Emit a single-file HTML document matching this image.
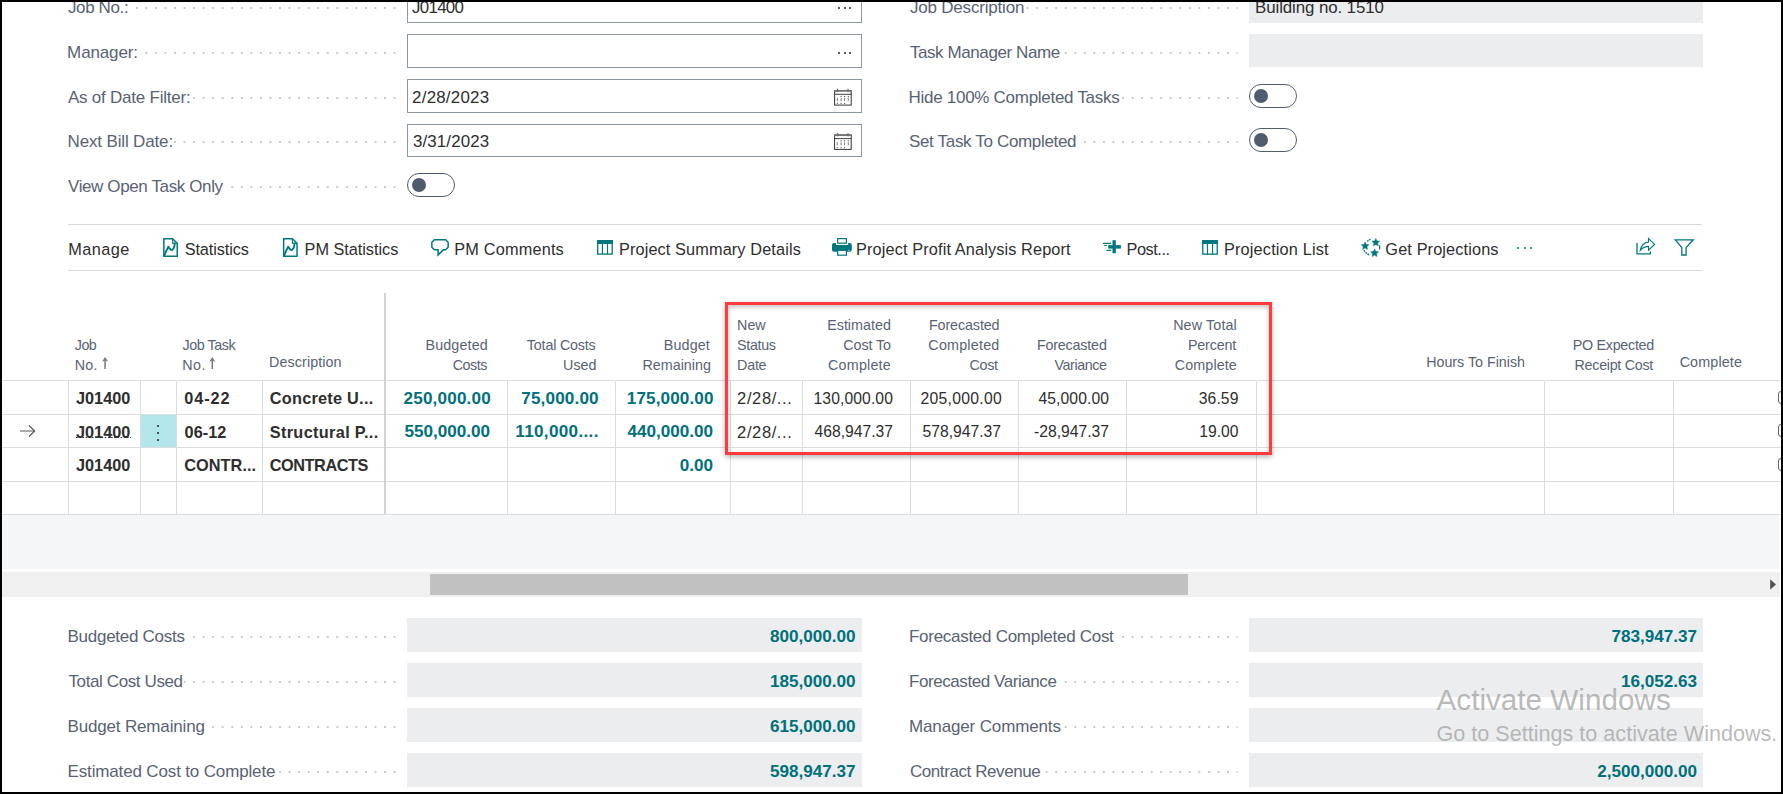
<!DOCTYPE html>
<html><head><meta charset="utf-8"><title>Job Projections</title>
<style>
html,body{margin:0;padding:0;}
body{width:1783px;height:794px;position:relative;overflow:hidden;background:#fff;font-family:"Liberation Sans",sans-serif;}
.t{position:absolute;line-height:20px;white-space:nowrap;}
.r{position:absolute;}
.lb{background:#fff;padding-right:1px;}
.dots{position:absolute;height:2.2px;background-image:linear-gradient(90deg,#c6cad0 0,#c6cad0 2.2px,rgba(255,255,255,0) 2.2px);background-size:9.55px 2.2px;background-repeat:repeat-x;border-radius:1px;}
.tg{position:absolute;width:48px;height:24px;box-sizing:border-box;border:1.4px solid #505C6D;border-radius:12px;}
.kn{position:absolute;left:3.6px;top:3.6px;width:14px;height:14px;border-radius:50%;background:#505C6D;}
.ov{position:absolute;left:0;top:0;pointer-events:none;}
.frame{position:absolute;left:0;top:0;width:1783px;height:794px;box-sizing:border-box;border:2px solid #000;pointer-events:none;}
</style></head><body>
<div class="dots" style="left:69.05px;top:6.9px;width:327.55px;"></div>
<div class="t" style="top:-2.20px;font-size:17px;color:#586373;letter-spacing:-0.38px;left:68.0px;"><span class="lb">Job No.:</span></div>
<div class="dots" style="left:69.05px;top:51.9px;width:327.55px;"></div>
<div class="t" style="top:42.80px;font-size:17px;color:#586373;letter-spacing:-0.128px;left:67.1px;"><span class="lb">Manager:</span></div>
<div class="dots" style="left:69.05px;top:96.9px;width:327.55px;"></div>
<div class="t" style="top:87.80px;font-size:17px;color:#586373;letter-spacing:-0.231px;left:68.0px;"><span class="lb">As of Date Filter:</span></div>
<div class="dots" style="left:69.05px;top:140.9px;width:327.55px;"></div>
<div class="t" style="top:131.80px;font-size:17px;color:#586373;letter-spacing:-0.151px;left:67.55px;"><span class="lb">Next Bill Date:</span></div>
<div class="dots" style="left:69.05px;top:185.9px;width:327.55px;"></div>
<div class="t" style="top:176.80px;font-size:17px;color:#586373;letter-spacing:-0.38px;left:68.0px;"><span class="lb">View Open Task Only</span></div>
<div class="dots" style="left:912.4px;top:6.9px;width:325.70000000000005px;"></div>
<div class="t" style="top:-2.20px;font-size:17px;color:#586373;letter-spacing:-0.19px;left:909.9px;"><span class="lb">Job Description</span></div>
<div class="dots" style="left:912.4px;top:51.9px;width:325.70000000000005px;"></div>
<div class="t" style="top:42.80px;font-size:17px;color:#586373;letter-spacing:-0.41300000000000003px;left:909.9px;"><span class="lb">Task Manager Name</span></div>
<div class="dots" style="left:912.4px;top:96.9px;width:325.70000000000005px;"></div>
<div class="t" style="top:87.80px;font-size:17px;color:#586373;letter-spacing:-0.28400000000000003px;left:908.55px;"><span class="lb">Hide 100% Completed Tasks</span></div>
<div class="dots" style="left:912.4px;top:140.9px;width:325.70000000000005px;"></div>
<div class="t" style="top:131.80px;font-size:17px;color:#586373;letter-spacing:-0.335px;left:909.0px;"><span class="lb">Set Task To Completed</span></div>
<div class="r" style="left:407px;top:-11px;width:455px;height:34px;border:1px solid #8d96a3;box-sizing:border-box;background:#fff;"></div>
<div class="r" style="left:407px;top:34px;width:455px;height:34px;border:1px solid #8d96a3;box-sizing:border-box;background:#fff;"></div>
<div class="r" style="left:407px;top:79px;width:455px;height:34px;border:1px solid #8d96a3;box-sizing:border-box;background:#fff;"></div>
<div class="r" style="left:407px;top:123.5px;width:455px;height:33.5px;border:1px solid #8d96a3;box-sizing:border-box;background:#fff;"></div>
<div class="t" style="top:-2.20px;font-size:16.9px;color:#2e2e2e;letter-spacing:-0.72px;left:412.1px;">J01400</div>
<div class="t" style="top:87.80px;font-size:16.9px;color:#2e2e2e;letter-spacing:0.224px;left:412.1px;">2/28/2023</div>
<div class="t" style="top:131.80px;font-size:16.9px;color:#2e2e2e;letter-spacing:0.112px;left:413.0px;">3/31/2023</div>
<div class="r" style="left:838px;top:7px;width:2px;height:2px;background:#222;border-radius:1px;"></div>
<div class="r" style="left:843.5px;top:7px;width:2.0px;height:2px;background:#222;border-radius:1px;"></div>
<div class="r" style="left:849px;top:7px;width:2px;height:2px;background:#222;border-radius:1px;"></div>
<div class="r" style="left:838px;top:51.5px;width:2px;height:2.0px;background:#222;border-radius:1px;"></div>
<div class="r" style="left:843.5px;top:51.5px;width:2.0px;height:2.0px;background:#222;border-radius:1px;"></div>
<div class="r" style="left:849px;top:51.5px;width:2px;height:2.0px;background:#222;border-radius:1px;"></div>
<div class="tg" style="left:407px;top:173px;"><div class="kn"></div></div>
<div class="tg" style="left:1249px;top:84px;"><div class="kn"></div></div>
<div class="tg" style="left:1249px;top:128px;"><div class="kn"></div></div>
<div class="r" style="left:1249px;top:-11px;width:454px;height:34px;background:#ebedef;"></div>
<div class="r" style="left:1249px;top:34px;width:454px;height:33px;background:#ebedef;"></div>
<div class="t" style="top:-2.20px;font-size:16.9px;color:#2e2e2e;letter-spacing:-0.111px;left:1255.1px;">Building no. 1510</div>
<div class="r" style="left:68px;top:224px;width:1634px;height:1px;background:#d6d9dd;"></div>
<div class="r" style="left:68px;top:270px;width:1634px;height:1px;background:#d6d9dd;"></div>
<div class="t" style="top:239.30px;font-size:16.3px;color:#2e2e2e;letter-spacing:0.45px;left:68.15px;">Manage</div>
<div class="t" style="top:239.30px;font-size:16.3px;color:#2e2e2e;letter-spacing:-0.1px;left:184.7px;">Statistics</div>
<div class="t" style="top:239.30px;font-size:16.3px;color:#2e2e2e;letter-spacing:-0.025px;left:304.54999999999995px;">PM Statistics</div>
<div class="t" style="top:239.30px;font-size:16.3px;color:#2e2e2e;letter-spacing:0.18px;left:454.3px;">PM Comments</div>
<div class="t" style="top:239.30px;font-size:16.3px;color:#2e2e2e;letter-spacing:0.123px;left:618.9499999999999px;">Project Summary Details</div>
<div class="t" style="top:239.30px;font-size:16.3px;color:#2e2e2e;letter-spacing:0.131px;left:856.0px;">Project Profit Analysis Report</div>
<div class="t" style="top:239.30px;font-size:16.3px;color:#2e2e2e;letter-spacing:-0.45px;left:1126.5500000000002px;">Post...</div>
<div class="t" style="top:239.30px;font-size:16.3px;color:#2e2e2e;letter-spacing:0.163px;left:1224.0px;">Projection List</div>
<div class="t" style="top:239.30px;font-size:16.3px;color:#2e2e2e;letter-spacing:0.134px;left:1385.34px;">Get Projections</div>
<div class="r" style="left:1517px;top:247px;width:2px;height:2px;background:#00707a;border-radius:1px;"></div>
<div class="r" style="left:1523.5px;top:247px;width:2.0px;height:2px;background:#00707a;border-radius:1px;"></div>
<div class="r" style="left:1530px;top:247px;width:2px;height:2px;background:#00707a;border-radius:1px;"></div>
<div class="r" style="left:2px;top:380px;width:1779px;height:1px;background:#d9dce0;"></div>
<div class="r" style="left:2px;top:414px;width:1779px;height:1px;background:#d9dce0;"></div>
<div class="r" style="left:2px;top:447px;width:1779px;height:1px;background:#d9dce0;"></div>
<div class="r" style="left:2px;top:481px;width:1779px;height:1px;background:#d9dce0;"></div>
<div class="r" style="left:2px;top:514px;width:1779px;height:1px;background:#d9dce0;"></div>
<div class="r" style="left:384px;top:293px;width:2px;height:221px;background:#d0d3d8;"></div>
<div class="r" style="left:68px;top:380px;width:1px;height:134px;background:#d9dce0;"></div>
<div class="r" style="left:140px;top:380px;width:1px;height:134px;background:#d9dce0;"></div>
<div class="r" style="left:176px;top:380px;width:1px;height:134px;background:#d9dce0;"></div>
<div class="r" style="left:262px;top:380px;width:1px;height:134px;background:#d9dce0;"></div>
<div class="r" style="left:507px;top:380px;width:1px;height:134px;background:#d9dce0;"></div>
<div class="r" style="left:615px;top:380px;width:1px;height:134px;background:#d9dce0;"></div>
<div class="r" style="left:730px;top:380px;width:1px;height:134px;background:#d9dce0;"></div>
<div class="r" style="left:802px;top:380px;width:1px;height:134px;background:#d9dce0;"></div>
<div class="r" style="left:910px;top:380px;width:1px;height:134px;background:#d9dce0;"></div>
<div class="r" style="left:1018px;top:380px;width:1px;height:134px;background:#d9dce0;"></div>
<div class="r" style="left:1126px;top:380px;width:1px;height:134px;background:#d9dce0;"></div>
<div class="r" style="left:1256px;top:380px;width:1px;height:134px;background:#d9dce0;"></div>
<div class="r" style="left:1544px;top:380px;width:1px;height:134px;background:#d9dce0;"></div>
<div class="r" style="left:1673px;top:380px;width:1px;height:134px;background:#d9dce0;"></div>
<div class="r" style="left:141px;top:415px;width:35px;height:32px;background:#b3e6ea;"></div>
<div class="r" style="left:157px;top:424.8px;width:2.4000000000000057px;height:2.3999999999999773px;background:#222;border-radius:50%;"></div>
<div class="r" style="left:157px;top:431.8px;width:2.4000000000000057px;height:2.3999999999999773px;background:#222;border-radius:50%;"></div>
<div class="r" style="left:157px;top:438.5px;width:2.4000000000000057px;height:2.3999999999999773px;background:#222;border-radius:50%;"></div>
<svg width="18" height="14" viewBox="0 0 18 14" style="position:absolute;left:19px;top:424px">
<line x1="1" y1="7" x2="15.5" y2="7" stroke="#666" stroke-width="1.1"/>
<path d="M10 1.5 L15.7 7 L10 12.5" fill="none" stroke="#555" stroke-width="1.1"/>
</svg>
<div class="t" style="top:334.80px;font-size:14.3px;color:#586373;letter-spacing:-0.54px;left:74.82px;">Job</div>
<div class="t" style="top:354.60px;font-size:14.3px;color:#586373;letter-spacing:0.18px;left:74.86px;">No.</div>
<div class="t" style="top:334.80px;font-size:14.3px;color:#586373;letter-spacing:-0.434px;left:182.46px;">Job Task</div>
<div class="t" style="top:354.60px;font-size:14.3px;color:#586373;letter-spacing:0.45px;left:182.32px;">No.</div>
<div class="t" style="top:352.30px;font-size:14.3px;color:#586373;letter-spacing:0.09px;left:269.1px;">Description</div>
<div class="t" style="top:334.80px;font-size:14.3px;color:#586373;letter-spacing:0.153px;right:1295.1px;text-align:right;">Budgeted</div>
<div class="t" style="top:354.60px;font-size:14.3px;color:#586373;letter-spacing:-0.45px;right:1296.0px;text-align:right;">Costs</div>
<div class="t" style="top:334.80px;font-size:14.3px;color:#586373;letter-spacing:-0.18px;right:1187.42px;text-align:right;">Total Costs</div>
<div class="t" style="top:354.60px;font-size:14.3px;color:#586373;right:1186.52px;text-align:right;">Used</div>
<div class="t" style="top:334.80px;font-size:14.3px;color:#586373;letter-spacing:0.144px;right:1073.0px;text-align:right;">Budget</div>
<div class="t" style="top:354.60px;font-size:14.3px;color:#586373;letter-spacing:0.001px;right:1072.1px;text-align:right;">Remaining</div>
<div class="t" style="top:314.90px;font-size:14.3px;color:#586373;left:737.1px;">New</div>
<div class="t" style="top:334.80px;font-size:14.3px;color:#586373;letter-spacing:-0.324px;left:737.1px;">Status</div>
<div class="t" style="top:354.60px;font-size:14.3px;color:#586373;letter-spacing:-0.24px;left:737.1px;">Date</div>
<div class="t" style="top:314.90px;font-size:14.3px;color:#586373;letter-spacing:0.02px;right:892.1px;text-align:right;">Estimated</div>
<div class="t" style="top:334.80px;font-size:14.3px;color:#586373;letter-spacing:-0.09px;right:892.1px;text-align:right;">Cost To</div>
<div class="t" style="top:354.60px;font-size:14.3px;color:#586373;letter-spacing:0.202px;right:892.1px;text-align:right;">Complete</div>
<div class="t" style="top:314.90px;font-size:14.3px;color:#586373;letter-spacing:-0.1px;right:783.52px;text-align:right;">Forecasted</div>
<div class="t" style="top:334.80px;font-size:14.3px;color:#586373;letter-spacing:0.223px;right:783.52px;text-align:right;">Completed</div>
<div class="t" style="top:354.60px;font-size:14.3px;color:#586373;letter-spacing:-0.3px;right:785.32px;text-align:right;">Cost</div>
<div class="t" style="top:334.80px;font-size:14.3px;color:#586373;letter-spacing:-0.18px;right:676.3400000000001px;text-align:right;">Forecasted</div>
<div class="t" style="top:354.60px;font-size:14.3px;color:#586373;letter-spacing:-0.386px;right:676.3400000000001px;text-align:right;">Variance</div>
<div class="t" style="top:314.90px;font-size:14.3px;color:#586373;letter-spacing:0.137px;right:546.0999999999999px;text-align:right;">New Total</div>
<div class="t" style="top:334.80px;font-size:14.3px;color:#586373;letter-spacing:-0.18px;right:547.0px;text-align:right;">Percent</div>
<div class="t" style="top:354.60px;font-size:14.3px;color:#586373;letter-spacing:0.106px;right:546.0999999999999px;text-align:right;">Complete</div>
<div class="t" style="top:352.30px;font-size:14.3px;color:#586373;letter-spacing:-0.019px;right:258.02px;text-align:right;">Hours To Finish</div>
<div class="t" style="top:334.80px;font-size:14.3px;color:#586373;letter-spacing:-0.288px;right:129.0999999999999px;text-align:right;">PO Expected</div>
<div class="t" style="top:354.60px;font-size:14.3px;color:#586373;letter-spacing:-0.285px;right:130.0px;text-align:right;">Receipt Cost</div>
<div class="t" style="top:352.30px;font-size:14.3px;color:#586373;letter-spacing:0.155px;left:1679.64px;">Complete</div>
<div class="t" style="top:388.30px;font-size:16.3px;color:#2e2e2e;font-weight:700;left:76px;">J01400</div>
<div class="t" style="top:421.80px;font-size:16.3px;color:#2e2e2e;font-weight:700;left:76px;">J01400</div>
<div class="t" style="top:455.30px;font-size:16.3px;color:#2e2e2e;font-weight:700;left:76px;">J01400</div>
<div class="t" style="top:388.30px;font-size:16.3px;color:#2e2e2e;font-weight:700;letter-spacing:0.9px;left:184.23999999999998px;">04-22</div>
<div class="t" style="top:421.80px;font-size:16.3px;color:#2e2e2e;font-weight:700;left:184.6px;">06-12</div>
<div class="t" style="top:455.30px;font-size:16.3px;color:#2e2e2e;font-weight:700;letter-spacing:0.054px;left:184.23999999999998px;">CONTR...</div>
<div class="t" style="top:388.30px;font-size:16.3px;color:#2e2e2e;font-weight:700;letter-spacing:0.255px;left:269.72px;">Concrete U...</div>
<div class="t" style="top:421.80px;font-size:16.3px;color:#2e2e2e;font-weight:700;letter-spacing:0.337px;left:269.72px;">Structural P...</div>
<div class="t" style="top:455.30px;font-size:16.3px;color:#2e2e2e;font-weight:700;letter-spacing:-0.434px;left:269.72px;">CONTRACTS</div>
<div class="r" style="left:76px;top:437px;width:55px;height:1px;background-image:linear-gradient(90deg,#333 60%,transparent 60%);background-size:3.2px 1px;"></div>
<div class="t" style="top:388.80px;font-size:17.1px;color:#00707a;font-weight:700;letter-spacing:0.18px;right:1292.1px;text-align:right;">250,000.00</div>
<div class="t" style="top:422.30px;font-size:17.1px;color:#00707a;font-weight:700;right:1293px;text-align:right;">550,000.00</div>
<div class="t" style="top:388.80px;font-size:17.1px;color:#00707a;font-weight:700;letter-spacing:0.154px;right:1184.28px;text-align:right;">75,000.00</div>
<div class="t" style="top:422.30px;font-size:17.1px;color:#00707a;font-weight:700;letter-spacing:0.324px;right:1184.28px;text-align:right;">110,000....</div>
<div class="t" style="top:388.80px;font-size:17.1px;color:#00707a;font-weight:700;letter-spacing:0.12px;right:1069.46px;text-align:right;">175,000.00</div>
<div class="t" style="top:422.30px;font-size:17.1px;color:#00707a;font-weight:700;right:1070px;text-align:right;">440,000.00</div>
<div class="t" style="top:455.80px;font-size:17.1px;color:#00707a;font-weight:700;right:1070px;text-align:right;">0.00</div>
<div class="t" style="top:388.30px;font-size:16.5px;color:#2e2e2e;letter-spacing:0.615px;left:737.1px;">2/28/...</div>
<div class="t" style="top:421.80px;font-size:16.5px;color:#2e2e2e;letter-spacing:0.615px;left:737.1px;">2/28/...</div>
<div class="t" style="top:388.80px;font-size:15.7px;color:#2e2e2e;letter-spacing:0.1px;right:890.0px;text-align:right;">130,000.00</div>
<div class="t" style="top:422.30px;font-size:15.7px;color:#2e2e2e;right:890px;text-align:right;">468,947.37</div>
<div class="t" style="top:388.80px;font-size:15.7px;color:#2e2e2e;letter-spacing:0.28px;right:781.1px;text-align:right;">205,000.00</div>
<div class="t" style="top:422.30px;font-size:15.7px;color:#2e2e2e;right:782px;text-align:right;">578,947.37</div>
<div class="t" style="top:388.80px;font-size:15.7px;color:#2e2e2e;letter-spacing:0.112px;right:673.8199999999999px;text-align:right;">45,000.00</div>
<div class="t" style="top:422.30px;font-size:15.7px;color:#2e2e2e;right:674px;text-align:right;">-28,947.37</div>
<div class="t" style="top:388.80px;font-size:15.7px;color:#2e2e2e;letter-spacing:0.09px;right:544.5px;text-align:right;">36.59</div>
<div class="t" style="top:422.30px;font-size:15.7px;color:#2e2e2e;right:544.5px;text-align:right;">19.00</div>
<div class="r" style="left:1778px;top:390.5px;width:14px;height:13.0px;border:1.3px solid #666;border-radius:3px;box-sizing:border-box;"></div>
<div class="r" style="left:1778px;top:424.0px;width:14px;height:13.0px;border:1.3px solid #666;border-radius:3px;box-sizing:border-box;"></div>
<div class="r" style="left:1778px;top:457.5px;width:14px;height:13.0px;border:1.3px solid #666;border-radius:3px;box-sizing:border-box;"></div>
<div class="r" style="left:2px;top:515px;width:1778px;height:54.200000000000045px;background:#f5f6f8;"></div>
<div class="r" style="left:2px;top:572px;width:1778px;height:24.700000000000045px;background:#f0f0f0;"></div>
<div class="r" style="left:430px;top:573.8px;width:758px;height:21.0px;background:#c1c1c1;"></div>
<div class="r" style="left:725px;top:302px;width:547px;height:153px;border:3px solid #ff3b3b;box-sizing:border-box;box-shadow:0 2px 5px rgba(0,0,0,.3), inset 0 2px 5px rgba(0,0,0,.25);"></div>
<div class="r" style="left:407px;top:618px;width:455px;height:34px;background:#ebedef;"></div>
<div class="r" style="left:1249px;top:618px;width:454px;height:34px;background:#ebedef;"></div>
<div class="dots" style="left:69.05px;top:635.9px;width:327.55px;"></div>
<div class="dots" style="left:912.4px;top:635.9px;width:325.70000000000005px;"></div>
<div class="t" style="top:626.80px;font-size:17px;color:#586373;letter-spacing:-0.278px;left:67.55px;"><span class="lb">Budgeted Costs</span></div>
<div class="t" style="top:626.80px;font-size:17px;color:#586373;letter-spacing:-0.28400000000000003px;left:909.0px;"><span class="lb">Forecasted Completed Cost</span></div>
<div class="t" style="top:626.80px;font-size:17.1px;color:#00707a;font-weight:700;right:927.5px;text-align:right;">800,000.00</div>
<div class="t" style="top:626.80px;font-size:17.1px;color:#00707a;font-weight:700;right:86px;text-align:right;">783,947.37</div>
<div class="r" style="left:407px;top:663px;width:455px;height:34px;background:#ebedef;"></div>
<div class="r" style="left:1249px;top:663px;width:454px;height:34px;background:#ebedef;"></div>
<div class="dots" style="left:69.05px;top:680.9px;width:327.55px;"></div>
<div class="dots" style="left:912.4px;top:680.9px;width:325.70000000000005px;"></div>
<div class="t" style="top:671.80px;font-size:17px;color:#586373;letter-spacing:-0.383px;left:68.45px;"><span class="lb">Total Cost Used</span></div>
<div class="t" style="top:671.80px;font-size:17px;color:#586373;letter-spacing:-0.43px;left:909.0px;"><span class="lb">Forecasted Variance</span></div>
<div class="t" style="top:671.80px;font-size:17.1px;color:#00707a;font-weight:700;right:927.5px;text-align:right;">185,000.00</div>
<div class="t" style="top:671.80px;font-size:17.1px;color:#00707a;font-weight:700;right:86px;text-align:right;">16,052.63</div>
<div class="r" style="left:407px;top:708px;width:455px;height:34px;background:#ebedef;"></div>
<div class="r" style="left:1249px;top:708px;width:454px;height:34px;background:#ebedef;"></div>
<div class="dots" style="left:69.05px;top:725.9px;width:327.55px;"></div>
<div class="dots" style="left:912.4px;top:725.9px;width:325.70000000000005px;"></div>
<div class="t" style="top:716.80px;font-size:17px;color:#586373;letter-spacing:-0.17px;left:67.55px;"><span class="lb">Budget Remaining</span></div>
<div class="t" style="top:716.80px;font-size:17px;color:#586373;letter-spacing:-0.14px;left:909.0px;"><span class="lb">Manager Comments</span></div>
<div class="t" style="top:716.80px;font-size:17.1px;color:#00707a;font-weight:700;right:927.5px;text-align:right;">615,000.00</div>
<div class="r" style="left:407px;top:753px;width:455px;height:34px;background:#ebedef;"></div>
<div class="r" style="left:1249px;top:753px;width:454px;height:34px;background:#ebedef;"></div>
<div class="dots" style="left:69.05px;top:770.9px;width:327.55px;"></div>
<div class="dots" style="left:912.4px;top:770.9px;width:325.70000000000005px;"></div>
<div class="t" style="top:761.80px;font-size:17px;color:#586373;letter-spacing:-0.151px;left:67.55px;"><span class="lb">Estimated Cost to Complete</span></div>
<div class="t" style="top:761.80px;font-size:17px;color:#586373;letter-spacing:-0.41000000000000003px;left:909.9px;"><span class="lb">Contract Revenue</span></div>
<div class="t" style="top:761.80px;font-size:17.1px;color:#00707a;font-weight:700;right:927.5px;text-align:right;">598,947.37</div>
<div class="t" style="top:761.80px;font-size:17.1px;color:#00707a;font-weight:700;right:86px;text-align:right;">2,500,000.00</div>
<div class="t" style="top:689.80px;font-size:29.7px;color:rgba(160,160,160,.72);left:1436.5px;">Activate Windows</div>
<div class="t" style="top:723.80px;font-size:21.6px;color:rgba(160,160,160,.72);left:1436.5px;">Go to Settings to activate Windows.</div>
<svg class="ov" width="1783" height="794" viewBox="0 0 1783 794"><rect x="834.6" y="90.6" width="16.6" height="14.5" fill="none" stroke="#333" stroke-width="1"/><rect x="834.1" y="90.1" width="17.6" height="1.6" fill="#777"/><rect x="834.1" y="93.8" width="17.6" height="1" fill="#444"/><rect x="836.9" y="88.8" width="1.2" height="3.3" fill="#666"/><rect x="847.4" y="88.8" width="1.2" height="3.3" fill="#666"/><rect x="840.5500000000001" y="95.9" width="1.1" height="1.1" fill="#555"/><rect x="843.95" y="95.9" width="1.1" height="1.1" fill="#555"/><rect x="847.75" y="95.9" width="1.1" height="1.1" fill="#555"/><rect x="836.75" y="97.9" width="1.1" height="3.2" fill="#888"/><rect x="840.5500000000001" y="97.9" width="1.1" height="3.2" fill="#888"/><rect x="843.95" y="97.9" width="1.1" height="3.2" fill="#888"/><rect x="847.75" y="97.9" width="1.1" height="3.2" fill="#888"/><rect x="836.75" y="102.8" width="1.1" height="1.1" fill="#555"/><rect x="840.5500000000001" y="102.8" width="1.1" height="1.1" fill="#555"/><rect x="843.95" y="102.8" width="1.1" height="1.1" fill="#555"/>
<rect x="834.6" y="134.89999999999998" width="16.6" height="14.5" fill="none" stroke="#333" stroke-width="1"/><rect x="834.1" y="134.39999999999998" width="17.6" height="1.6" fill="#777"/><rect x="834.1" y="138.1" width="17.6" height="1" fill="#444"/><rect x="836.9" y="133.1" width="1.2" height="3.3" fill="#666"/><rect x="847.4" y="133.1" width="1.2" height="3.3" fill="#666"/><rect x="840.5500000000001" y="140.2" width="1.1" height="1.1" fill="#555"/><rect x="843.95" y="140.2" width="1.1" height="1.1" fill="#555"/><rect x="847.75" y="140.2" width="1.1" height="1.1" fill="#555"/><rect x="836.75" y="142.2" width="1.1" height="3.2" fill="#888"/><rect x="840.5500000000001" y="142.2" width="1.1" height="3.2" fill="#888"/><rect x="843.95" y="142.2" width="1.1" height="3.2" fill="#888"/><rect x="847.75" y="142.2" width="1.1" height="3.2" fill="#888"/><rect x="836.75" y="147.1" width="1.1" height="1.1" fill="#555"/><rect x="840.5500000000001" y="147.1" width="1.1" height="1.1" fill="#555"/><rect x="843.95" y="147.1" width="1.1" height="1.1" fill="#555"/>
<g transform="translate(0,0)">
<path d="M163.85 238.65 H172.6 L177.25 243.3 V256.15 H163.85 Z" fill="none" stroke="#00777f" stroke-width="1.5"/>
<path d="M172.6 239 V243.1 H177" fill="none" stroke="#00777f" stroke-width="1.1"/>
<path d="M164.2 255.8 L166.4 250.6 L168.4 246.8 L170.6 249.6 L172.2 250 L173.8 248 L174.5 245.4 L174.8 243.2" fill="none" stroke="#00777f" stroke-width="1.9" stroke-linejoin="round"/>
</g>
<g transform="translate(119.8,0)">
<path d="M163.85 238.65 H172.6 L177.25 243.3 V256.15 H163.85 Z" fill="none" stroke="#00777f" stroke-width="1.5"/>
<path d="M172.6 239 V243.1 H177" fill="none" stroke="#00777f" stroke-width="1.1"/>
<path d="M164.2 255.8 L166.4 250.6 L168.4 246.8 L170.6 249.6 L172.2 250 L173.8 248 L174.5 245.4 L174.8 243.2" fill="none" stroke="#00777f" stroke-width="1.9" stroke-linejoin="round"/>
</g>
<path d="M434.4 239.65 H445.6 L448.15 242.2 V247.3 L445.6 249.85 H443.4 L438.1 254.9 V249.85 H434.4 L431.85 247.3 V242.2 Z" fill="none" stroke="#00777f" stroke-width="1.5" stroke-linejoin="miter"/>
<rect x="597.6999999999999" y="240.70000000000002" width="14.5" height="13.4" fill="none" stroke="#00777f" stroke-width="1.3"/>
<rect x="597.05" y="240.05" width="15.8" height="3.9" fill="#00777f"/>
<rect x="601.8499999999999" y="243.05" width="1.15" height="11" fill="#00777f"/>
<rect x="606.9499999999999" y="243.05" width="1.15" height="11" fill="#00777f"/>
<rect x="1202.75" y="240.75" width="14.5" height="13.4" fill="none" stroke="#00777f" stroke-width="1.3"/>
<rect x="1202.1" y="240.1" width="15.8" height="3.9" fill="#00777f"/>
<rect x="1206.8999999999999" y="243.1" width="1.15" height="11" fill="#00777f"/>
<rect x="1212.0" y="243.1" width="1.15" height="11" fill="#00777f"/>
<rect x="837.7" y="238.6" width="8.7" height="4.6" fill="none" stroke="#00777f" stroke-width="1.2"/>
<path d="M834 242.9 H836 V245.1 H848.2 V242.9 H849.8 Q851.8 242.9 851.8 244.9 V249.8 Q851.8 251.8 849.8 251.8 H834 Q832 251.8 832 249.8 V244.9 Q832 242.9 834 242.9 Z" fill="#00777f"/>
<rect x="837.7" y="250.3" width="8.7" height="4.9" fill="#fff" stroke="#00777f" stroke-width="1.2"/>
<ellipse cx="849" cy="250.2" rx="0.9" ry="0.5" fill="#bfe0e2"/>
<rect x="1112.5" y="240.2" width="3.3" height="13" fill="#00777f"/>
<rect x="1108.2" y="245.1" width="12.7" height="3.5" fill="#00777f"/>
<line x1="1103.6" y1="243.4" x2="1110.6" y2="243.4" stroke="#00777f" stroke-width="1.2" stroke-linecap="round"/>
<line x1="1104.6" y1="245.5" x2="1106.6" y2="245.5" stroke="#00777f" stroke-width="1.1" stroke-linecap="round"/>
<line x1="1105.3" y1="248.1" x2="1106.5" y2="248.1" stroke="#00777f" stroke-width="1" opacity=".45"/>
<line x1="1107" y1="250.4" x2="1110.6" y2="250.4" stroke="#00777f" stroke-width="1.2" stroke-linecap="round"/>
<polygon points="1375.80,238.40 1376.96,240.91 1379.70,241.23 1377.67,243.11 1378.21,245.82 1375.80,244.47 1373.39,245.82 1373.93,243.11 1371.90,241.23 1374.64,240.91" fill="#00777f" stroke="#00777f" stroke-width="0.5" stroke-linejoin="round"/><polygon points="1365.10,241.90 1366.26,244.41 1369.00,244.73 1366.97,246.61 1367.51,249.32 1365.10,247.97 1362.69,249.32 1363.23,246.61 1361.20,244.73 1363.94,244.41" fill="#00777f" stroke="#00777f" stroke-width="0.5" stroke-linejoin="round"/><polygon points="1374.60,248.90 1375.78,251.47 1378.59,251.80 1376.52,253.72 1377.07,256.50 1374.60,255.12 1372.13,256.50 1372.68,253.72 1370.61,251.80 1373.42,251.47" fill="#00777f" stroke="#00777f" stroke-width="0.5" stroke-linejoin="round"/><path d="M1367.2 241.4 Q1368.8 239.9 1370.8 239.2" fill="none" stroke="#00777f" stroke-width="1.3" stroke-dasharray="1.6 0.7"/>
<line x1="1379.6" y1="245.2" x2="1379.6" y2="249.6" stroke="#00777f" stroke-width="1.2"/>
<path d="M1363.8 250.2 Q1366.2 253.6 1370 255.3" fill="none" stroke="#00777f" stroke-width="1.3" stroke-dasharray="1.8 0.8"/>
<path d="M1637 242.9 V253.8 H1650.4 V251.4" fill="none" stroke="#00777f" stroke-width="1.3"/>
<path d="M1640.3 250.3 Q1641.8 242.6 1648.5 242.1 V238.6 L1654.6 244.4 L1648.5 250.2 V246.4 Q1643.8 246.4 1640.3 250.3 Z" fill="none" stroke="#00777f" stroke-width="1.1" stroke-linejoin="miter"/>
<path d="M1675.3 239.8 H1693.3 L1686.1 247.6 V255 H1681.8 V247.6 Z" fill="none" stroke="#00777f" stroke-width="1.3" stroke-linejoin="miter"/>
<rect x="104.3" y="359.5" width="1.5" height="9.5" fill="#7a7a7a"/><polygon points="101.95,361.7 105.05,356.9 108.14999999999999,361.7 105.05,360.6" fill="#7a7a7a"/>
<rect x="211.55" y="359.5" width="1.5" height="9.5" fill="#7a7a7a"/><polygon points="209.20000000000002,361.7 212.3,356.9 215.4,361.7 212.3,360.6" fill="#7a7a7a"/>
<path d="M1770 578.9 L1776.2 584.5 L1770 590.1 Z" fill="#505050" stroke="#fff" stroke-width="0.6" stroke-opacity=".6"/></svg>
<div class="frame"></div>
</body></html>
